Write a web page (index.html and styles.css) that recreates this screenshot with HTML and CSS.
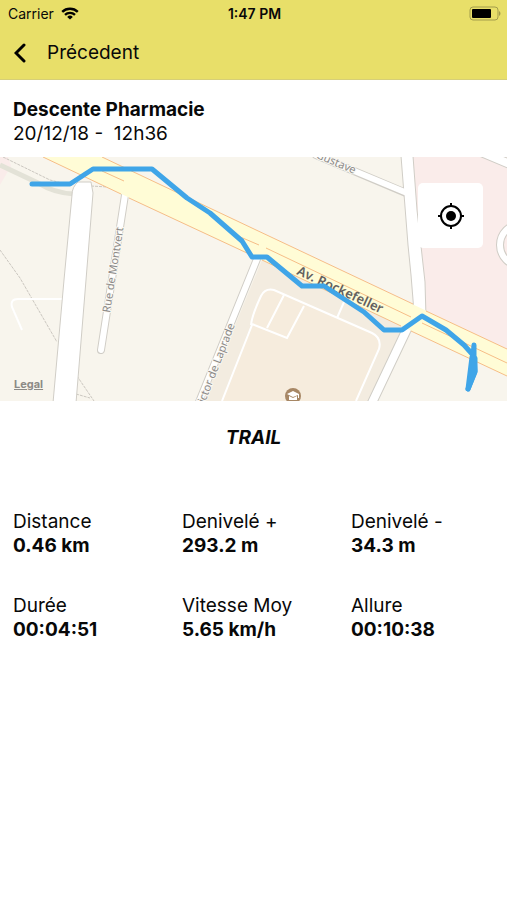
FILE: index.html
```html
<!DOCTYPE html>
<html lang="fr">
<head>
  <meta charset="UTF-8">
  <meta name="viewport" content="width=device-width, initial-scale=1">
  <title>Descente Pharmacie</title>
  <link rel="stylesheet" href="styles.css">
</head>
<body>

  <header class="header">
    <div class="status-bar">
      <div class="carrier">
        <span>Carrier</span>
        <svg class="wifi" viewBox="0 0 18 13" aria-hidden="true">
          <path d="M1.2 4.8a11.3 11.3 0 0 1 15.6 0" />
          <path d="M4 7.9a7.2 7.2 0 0 1 10 0" />
          <path class="wifi-dot" d="M9 12.6L6.2 9.9a4 4 0 0 1 5.6 0z" />
        </svg>
      </div>
      <span class="time">1:47 PM</span>
      <svg class="battery" viewBox="0 0 32 15" aria-hidden="true">
        <rect class="battery-case" x="1" y="1" width="28" height="13" rx="3" />
        <rect x="3" y="3" width="19" height="9" rx="1" />
        <path class="battery-tip" d="M30 5c2 1 2 4 0 5z" />
      </svg>
    </div>
    <button class="back" type="button">
      <svg viewBox="0 0 12 20" aria-hidden="true"><path d="M10 2L2 10l8 8" /></svg>
      <span>Précedent</span>
    </button>
  </header>

  <main>
    <div class="title">
      <h1>Descente Pharmacie</h1>
      <p>20/12/18 -&nbsp; 12h36</p>
    </div>

    <div class="map">
      <svg class="map-view" viewBox="0 0 507 244" preserveAspectRatio="xMidYMid slice" role="img" aria-label="Parcours">
        <!-- areas -->
        <path class="pink" d="M413 0H507V192L426 155L425 125L417 53z" />
        <path class="pink" d="M0 0H8L11 9L0 28z" />
        <path class="block" d="M262 103L404 170L370 244H204z" />
        <path class="school" d="M222 244L254 164Q252 158 261 139Q265 131 274 133L372 176Q382 181 379 192L356 244z" />

        <!-- footpaths -->
        <path class="path-grey" d="M0 8L38 26Q54 36 74 37" />
        <path class="path-dash" d="M3 0L50 23L62 26M0 93L20 121L57 185M77 219L94 244M76 237L90 241M91 29L108 30" />
        <path class="path-white" d="M63 142H18Q10 142 12 150L22 173" />
        <path class="path-white" d="M222 244L252 168M252 167L287 181L304 149M284 138L267 171M344 145L337 161" />
        <path class="path-white" d="M251 168Q252 158 261 139Q265 131 274 133L372 176Q382 181 379 192L356 244" />

        <!-- streets -->
        <path class="street-edge w8" d="M125 38L101 193M257 102L197 250M316 -2L406 36" />
        <path class="street-edge w10" d="M407 172L370 250M474 -8L512 8" />
        <circle class="street-edge w8" cx="521" cy="88" r="21" />
        <path class="street" d="M401 -1L408 88L411 118L414 155L426 160L425 125L417 53L413 -1z" />
        <path class="street-fill w6" d="M125 38L101 193M257 102L197 250M316 -2L407 36" />
        <path class="street-fill w8" d="M407 172L370 250M474 -8L512 8" />
        <circle class="street-fill w6" cx="521" cy="88" r="21" />

        <!-- avenue -->
        <path class="avenue" d="M43 0L507 219V192L102 0z" />
        <path class="avenue-line" d="M43 0L121 37M129 41L247 96M262 103L401 169M411 174L507 219M102 0L254 72L413 147M426 154L507 192M102 14L124 24M238 79L259 88M266 91L411 160M422 166L507 206" />
        <path class="street" d="M53 246L64 123L72 38Q72 30 78 25L91 25L93 36L86 123L76 246z" />

        <!-- street names -->
        <text class="name" transform="translate(110 156) rotate(-81)">Rue de Montvert</text>
        <text class="name" text-anchor="end" transform="translate(235 168) rotate(-69)">Victor de Laprade</text>
        <text class="name" text-anchor="end" transform="translate(354 17) rotate(23)">Gustave</text>
        <text class="name avenue-name" transform="translate(296 117) rotate(25)">Av. Rockefeller</text>

        <!-- school marker -->
        <circle class="marker" cx="293" cy="239" r="8" />
        <path class="marker-icon" d="M287 237L293 234L299 237V241H298V238L293 240zM289 239L293 241L297 239V243H289z" />

        <!-- track -->
        <path class="track" d="M32 27H70L93 12H152L187 41L210 56L242 84L252 100H267L302 129H324L364 155L384 173H402L422 159L446 173L464 188L473 198L474 188V200L475 214L468 232" />
        <path class="track track-fill" d="M472 200L475 201V215L468 232z" />
      </svg>
      <a class="legal" href="#">Legal</a>
      <button class="locate" type="button" aria-label="Ma position">
        <svg viewBox="0 0 26 26" aria-hidden="true">
          <circle class="ring" cx="13" cy="13" r="10" />
          <circle cx="13" cy="13" r="5" />
          <path class="ring" d="M13 0V4M13 22V26M0 13H4M22 13H26" />
        </svg>
      </button>
    </div>

    <h2 class="sport">TRAIL</h2>

    <dl class="stats">
      <div><dt>Distance</dt><dd>0.46 km</dd></div>
      <div><dt>Denivelé +</dt><dd>293.2 m</dd></div>
      <div><dt>Denivelé -</dt><dd>34.3 m</dd></div>
      <div><dt>Durée</dt><dd>00:04:51</dd></div>
      <div><dt>Vitesse Moy</dt><dd>5.65 km/h</dd></div>
      <div><dt>Allure</dt><dd>00:10:38</dd></div>
    </dl>
  </main>

</body>
</html>
```
FILE: styles.css
```css
* {
  box-sizing: border-box;
}

body {
  margin: 0;
  background-color: white;
  color: #080808;
  font-family: Inter, sans-serif;
  font-size: 19px;
  line-height: 24px;
}

h1, h2, p, dl, dd {
  margin: 0;
}

h1, h2, dd {
  font-size: 19px;
  font-weight: 700;
}

button {
  border: none;
  color: inherit;
  font: inherit;
  cursor: pointer;
}

/* Header */
.header {
  background-color: #e8df69;
  border-bottom: 1px solid #d6cf78;
}

.status-bar {
  display: grid;
  grid-template-columns: 1fr auto 1fr;
  align-items: center;
  height: 27px;
  padding: 0 6px 0 8px;
  font-size: 14px;
}

.carrier {
  display: flex;
  align-items: center;
  gap: 7px;
}

.wifi {
  width: 18px;
  height: 13px;
  fill: none;
  stroke: black;
  stroke-width: 2.4;
}

.wifi-dot {
  fill: black;
  stroke: none;
}

.time {
  font-weight: 600;
}

.battery {
  justify-self: end;
  width: 32px;
  height: 15px;
}

.battery-case {
  fill: none;
  stroke: #a39d4c;
}

.battery-tip {
  fill: #a39d4c;
}

.back {
  display: flex;
  align-items: center;
  gap: 21px;
  height: 52px;
  padding: 0 14px;
  background: none;
}

.back svg {
  width: 12px;
  height: 20px;
  fill: none;
  stroke: black;
  stroke-width: 3;
  stroke-linecap: round;
}

/* Title */
.title {
  padding: 18px 13px 11px;
}

/* Map */
.map {
  position: relative;
  height: 244px;
  overflow: hidden;
}

.map-view {
  display: block;
  width: 100%;
  height: 100%;
  background-color: #f8f5ed;
}

.pink {
  fill: #faecea;
}

.block {
  fill: #f3ece0;
}

.school {
  fill: #f6ecdd;
}

.path-grey, .path-dash, .path-white, .street-edge, .street-fill, .avenue-line {
  fill: none;
}

.path-grey {
  stroke: #e3e2d7;
  stroke-width: 5;
}

.path-dash {
  stroke: #cbc7c0;
  stroke-dasharray: 3 1;
}

.path-white {
  stroke: white;
  stroke-width: 2;
}

.street {
  fill: white;
  stroke: #d0cdc6;
}

.street-edge {
  stroke: #d0cdc6;
  stroke-linecap: round;
}

.street-fill {
  stroke: white;
  stroke-linecap: round;
}

.w6 { stroke-width: 6; }
.w8 { stroke-width: 8; }
.w10 { stroke-width: 10; }

.avenue {
  fill: #fffcd6;
}

.avenue-line {
  stroke: #f6bd87;
}

.name {
  fill: #8c8a88;
  stroke: #faf8f3;
  stroke-width: 2;
  paint-order: stroke;
  font-family: "Noto Sans", sans-serif;
  font-size: 11px;
}

.avenue-name {
  fill: #62605e;
  stroke: none;
  font-size: 13px;
  font-weight: 600;
}

.marker {
  fill: #a78765;
}

.marker-icon {
  fill: white;
}

.track {
  fill: none;
  stroke: #3fa5e8;
  stroke-width: 5;
  stroke-linecap: round;
  stroke-linejoin: round;
}

.track-fill {
  fill: #3fa5e8;
}

.legal {
  position: absolute;
  left: 14px;
  bottom: 5px;
  color: #8c8a86;
  font-size: 11px;
  font-weight: 700;
}

.locate {
  position: absolute;
  top: 26px;
  right: 24px;
  display: flex;
  align-items: center;
  justify-content: center;
  width: 65px;
  height: 65px;
  padding: 0;
  border-radius: 5px;
  background-color: white;
}

.locate svg {
  width: 26px;
  height: 26px;
}

.ring {
  fill: none;
  stroke: black;
  stroke-width: 2;
}

/* Stats */
.sport {
  padding: 25px 13px 60px;
  font-style: italic;
  text-align: center;
}

.stats {
  display: grid;
  grid-template-columns: repeat(3, 1fr);
  row-gap: 36px;
}

.stats div {
  padding: 0 13px;
}
```
